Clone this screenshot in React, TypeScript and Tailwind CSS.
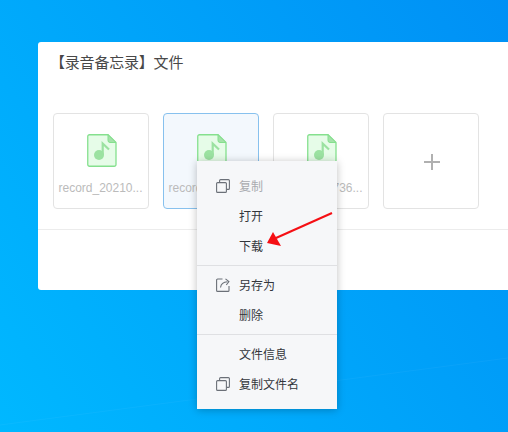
const FileIcon = () => (
  <svg width="30" height="33" viewBox="0 0 30 33" fill="none" className="ml-px">
    <path d="M2.5 .75H21L29 8.5V30.5a1.75 1.75 0 0 1-1.75 1.75H2.5A1.75 1.75 0 0 1 .75 30.5V2.5A1.75 1.75 0 0 1 2.5 .75Z" fill="#e6fce8" stroke="#85e08e" strokeWidth="1.3" />
    <path d="M21 .75L29 8.5H23a2 2 0 0 1-2-2Z" fill="#a4e2a9" stroke="#85e08e" strokeWidth="1" />
    <circle cx="12" cy="21" r="5" fill="#9be2a1" />
    <path d="M15.7 21V9.5L22 15.5" stroke="#9be2a1" strokeWidth="2.2" />
  </svg>
);

const CopyIcon = ({ color = "#6b7078" }: { color?: string }) => (
  <svg width="14" height="14" viewBox="0 0 14 14" fill="none" stroke={color} strokeWidth="1.1">
    <rect x=".6" y="3.6" width="9.8" height="9.8" rx="1" />
    <path d="M3.6 3.4V1.6a1 1 0 0 1 1-1h7.8a1 1 0 0 1 1 1v7.8a1 1 0 0 1-1 1h-1.8" />
  </svg>
);

const ShareIcon = () => (
  <svg width="14" height="14" viewBox="0 0 14 14" fill="none" stroke="#6b7078" strokeWidth="1.1">
    <path d="M6.5 1H1.6a1 1 0 0 0-1 1v10.4a1 1 0 0 0 1 1h10.4a1 1 0 0 0 1-1V8" />
    <path d="M4.5 9.5C5 6 7.5 4 11.5 3.8" />
    <path d="M9.5 .8l3.4 2.9-2.6 3.3" />
  </svg>
);

const Tile = ({ name, active }: { name: string; active?: boolean }) => (
  <div
    className={
      active
        ? "w-24 h-24 rounded border border-[#87c1ee] bg-[#f3f8fd] flex flex-col items-center pt-5"
        : "w-24 h-24 rounded border border-[#e3e3e3] bg-white flex flex-col items-center pt-5"
    }
  >
    <FileIcon />
    <div className="mt-[11px] pr-px text-xs leading-5 text-[#bbbbbb] whitespace-nowrap">{name}</div>
  </div>
);

const MenuItem = ({ label, icon, disabled }: { label: string; icon?: React.ReactNode; disabled?: boolean }) => (
  <div className="h-[30px] flex items-center pl-[19px]">
    <div className="w-[14px] h-[14px] mr-[9px] flex">{icon}</div>
    <span className={disabled ? "pt-0.5 text-xs text-[#a9abaf]" : "pt-0.5 text-xs text-[#33363b]"}>{label}</span>
  </div>
);

const Separator = () => <div className="my-1 h-px bg-[#dfe0e3]" />;

export default function App() {
  return (
    <div
      className="relative w-[508px] h-[432px] overflow-hidden pt-[42px] pl-[38px] bg-[linear-gradient(236deg,#0090f5,#00b8ff)]"
      style={{ fontFamily: '"Liberation Sans", "Noto Sans CJK SC", sans-serif' }}
    >
      {/* Wallpaper streak */}
      <svg className="absolute left-0 top-[350px]" width="508" height="82" viewBox="0 0 508 82" fill="none">
        <path d="M0 75L508 8" stroke="#ffffff" strokeOpacity="0.04" strokeWidth="1" />
      </svg>

      {/* Dialog */}
      <div className="relative w-[490px] h-[248px] bg-white rounded-[3px]">
        <div className="pl-3 pt-[11px] text-[15px] tracking-[-0.2px] leading-5 text-[#484848]">【录音备忘录】文件</div>
        <div className="flex gap-[14px] pl-[15px] mt-[40px]">
          <Tile name="record_20210..." />
          <Tile name="record_20210..." active />
          <Tile name="record_20736..." />
          <div className="w-24 h-24 rounded border border-[#e3e3e3] flex items-center justify-center pl-0.5 pt-0.5">
            <svg width="16" height="16" viewBox="0 0 16 16" stroke="#b0b0b0" strokeWidth="2">
              <path d="M8 0V16M0 8H16" />
            </svg>
          </div>
        </div>
        <div className="mt-5 h-px bg-[#ececec]" />
      </div>

      {/* Context menu */}
      <div className="absolute left-[197px] top-[161px] w-[140px] py-[10px] bg-[#f6f7f9] shadow-[0_1px_8px_rgba(0,0,0,0.25)]">
        <MenuItem label="复制" icon={<CopyIcon />} disabled />
        <MenuItem label="打开" />
        <MenuItem label="下载" />
        <Separator />
        <MenuItem label="另存为" icon={<ShareIcon />} />
        <MenuItem label="删除" />
        <Separator />
        <MenuItem label="文件信息" />
        <MenuItem label="复制文件名" icon={<CopyIcon />} />
      </div>

      {/* Annotation arrow */}
      <svg className="absolute left-[260px] top-[205px]" width="76" height="45" viewBox="0 0 76 45" fill="none">
        <path d="M72 8L16 33" stroke="#f50f14" strokeWidth="2" />
        <path d="M7 38L13 27L21 41Z" fill="#f50f14" />
      </svg>
    </div>
  );
}
